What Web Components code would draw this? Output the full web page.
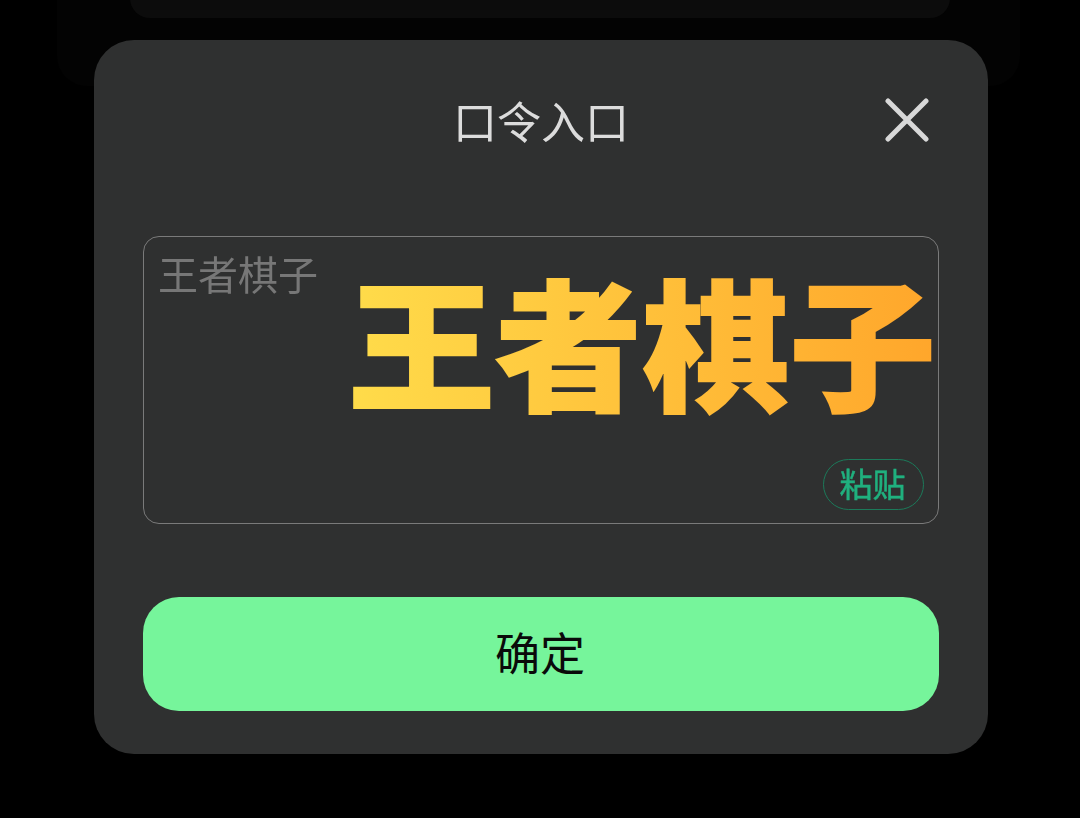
<!DOCTYPE html>
<html lang="zh">
<head>
<meta charset="utf-8">
<style>
  html, body { margin: 0; height: 100%; background: #000; }
  body { font-family: "Noto Sans CJK SC", "Noto Sans", sans-serif; overflow: hidden; }
</style>
</head>
<body>
<backdrop-cards></backdrop-cards>
<code-dialog heading="口令入口">
  <code-field placeholder="王者棋子" sticker="王者棋子" action="粘贴"></code-field>
  <confirm-button>确定</confirm-button>
</code-dialog>

<script>
// faint cards behind the dialog
class BackdropCards extends HTMLElement {
  constructor() {
    super();
    this.attachShadow({ mode: "open" });
    this.shadowRoot.innerHTML = `
      <style>
        :host { position: absolute; inset: 0; display: block; }
        .outer { position: absolute; left: 57px; right: 60px; top: -40px; height: 126px; background: #030303; border-radius: 0 0 30px 30px; }
        .inner { position: absolute; left: 130px; right: 130px; top: -40px; height: 58px; background: #0c0c0c; border-radius: 0 0 20px 20px; }
      </style>
      <div class="outer"></div>
      <div class="inner"></div>
    `;
  }
}
customElements.define("backdrop-cards", BackdropCards);

class CodeDialog extends HTMLElement {
  constructor() {
    super();
    this.attachShadow({ mode: "open" });
  }
  connectedCallback() {
    this.shadowRoot.innerHTML = `
      <style>
        :host {
          position: relative;
          display: flex;
          flex-direction: column;
          box-sizing: border-box;
          width: 894px;
          height: 714px;
          margin: 40px 0 0 94px;
          padding: 0 49px;
          background: #2f3030;
          border-radius: 40px;
        }
        header {
          height: 196px;
          display: flex;
          align-items: flex-start;
          justify-content: center;
          flex: none;
        }
        h2 {
          margin: 50px 0 0;
          font-size: 44px;
          line-height: 60px;
          font-weight: 400;
          color: #dcdcdc;
          will-change: transform;
        }
        .close {
          position: absolute;
          left: 791px;
          top: 58px;
          width: 44px;
          height: 44px;
        }
        .body { display: flex; flex-direction: column; gap: 73px; }
      </style>
      <header>
        <h2>${this.getAttribute("heading")}</h2>
        <svg class="close" viewBox="0 0 44 44" fill="none" stroke="#d8d8d8" stroke-width="5" stroke-linecap="round">
          <path d="M3 3 L41 41 M41 3 L3 41"/>
        </svg>
      </header>
      <div class="body"><slot></slot></div>
    `;
  }
}
customElements.define("code-dialog", CodeDialog);

class CodeField extends HTMLElement {
  constructor() {
    super();
    this.attachShadow({ mode: "open" });
  }
  connectedCallback() {
    this.shadowRoot.innerHTML = `
      <style>
        :host {
          position: relative;
          display: block;
          box-sizing: border-box;
          height: 288px;
          border: 1px solid #7a7a7a;
          border-radius: 16px;
        }
        .placeholder {
          padding: 7px 0 0 14px;
          font-size: 40px;
          line-height: 58px;
          color: #777;
          will-change: transform;
        }
        .sticker {
          position: absolute;
          left: 204px;
          top: 7px;
          font-size: 147px;
          line-height: 190px;
          font-weight: 900;
          white-space: nowrap;
          background: linear-gradient(90deg, #ffdc4a 0%, #ffa62b 100%);
          -webkit-background-clip: text;
          background-clip: text;
          color: transparent;
          -webkit-text-stroke: 2px transparent;
          transform: scaleY(0.96);
        }
        .paste {
          position: absolute;
          right: 14px;
          bottom: 13px;
          box-sizing: border-box;
          width: 101px;
          height: 51px;
          padding: 0 2px 4px 0;
          display: flex;
          align-items: center;
          justify-content: center;
          border: 1px solid #1c7a5a;
          border-radius: 26px;
          font-size: 33px;
          color: #20b07e;
          -webkit-text-stroke: 0.5px #20b07e;
          will-change: transform;
        }
      </style>
      <div class="placeholder">${this.getAttribute("placeholder")}</div>
      <div class="sticker">${this.getAttribute("sticker")}</div>
      <div class="paste">${this.getAttribute("action")}</div>
    `;
  }
}
customElements.define("code-field", CodeField);

class ConfirmButton extends HTMLElement {
  constructor() {
    super();
    this.attachShadow({ mode: "open" });
    this.shadowRoot.innerHTML = `
      <style>
        :host {
          display: flex;
          align-items: center;
          justify-content: center;
          box-sizing: border-box;
          height: 114px;
          padding: 0 2px 6px 0;
          background: #76f59b;
          border-radius: 36px;
          font-size: 45px;
          color: #0a0a0a;
        }
      </style>
      <slot></slot>
    `;
  }
}
customElements.define("confirm-button", ConfirmButton);
</script>
</body>
</html>
